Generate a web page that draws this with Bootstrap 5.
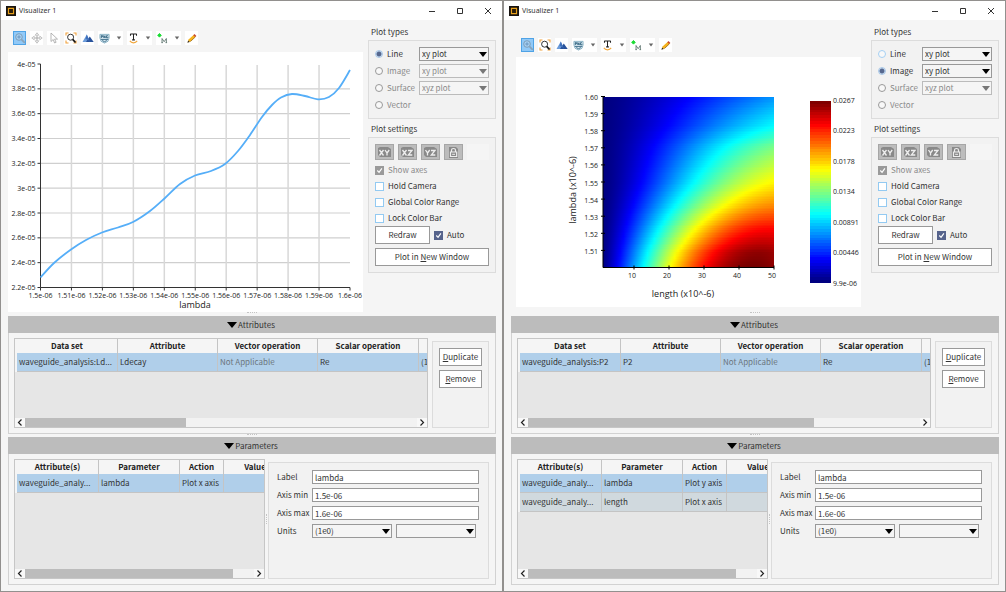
<!DOCTYPE html>
<html lang="en">
<head>
<meta charset="utf-8">
<meta name="viewport" content="width=device-width, initial-scale=1">
<title>Visualizer</title>
<link href="https://cdn.jsdelivr.net/npm/bootstrap@5.3.0/dist/css/bootstrap.min.css" rel="stylesheet">
<style>
  body { font-family: "Noto Sans CJK SC", "Noto Sans", sans-serif; font-size: 8px; line-height: 12px; color: #333; background: #92908e; }
  .desktop { min-height: 100vh; padding: 1px; gap: 2px; }
  .win { flex: 1 1 0; min-width: 0; background: #f5f5f5; }
  .titlebar { height: 19px; background: #fff; font-family: "Noto Sans", sans-serif; font-size: 7px; padding-left: 5px; gap: 3px; }
  .titlebar button { width: 28px; height: 19px; border: 0; background: none; padding: 0; line-height: 0; }
  .content { padding: 0 6px 6px 7px; }
  .main-line { padding-top: 11px; margin-right: 5px; }
  .main-image { padding: 18px 0 0 5px; margin-right: 10px; }
  .tools { gap: 4px; padding-left: 5px; margin-bottom: 7px; }
  .main-image .tools { margin-bottom: 5px; }
  .tools button { height: 14px; width: 13px; padding: 0; border: 0; background: #fff; gap: 6px; line-height: 0; display: flex; align-items: center; justify-content: center; }
  .tools button.drop { width: 25px; }
  .tools button.picked { background: #91c9f7; box-shadow: inset 0 0 0 1px #4fa3e6; }
  .plot { background: #fff; width: 100%; height: auto; display: block; font-family: "Open Sans", sans-serif; font-size: 7px; }
  .plot .axis-name { font-size: 9px; }
  .side { flex: 0 0 128px; padding-top: 4px; }
  .side-title { height: 16px; line-height: 16px; padding-left: 3px; }
  .group { background: #f2f2f2; border: 1px solid #dcdcdc; }
  .types { padding: 6px; display: grid; grid-template-columns: 44px 1fr; row-gap: 3px; margin-bottom: 2px; }
  .settings { padding: 6px; }
  .opt { gap: 4px; height: 14px; white-space: nowrap; }
  .off { color: #8a8a8a; }
  input[type=radio] { appearance: none; width: 8px; height: 8px; margin: 0; border: 1px solid #999; border-radius: 50%; background: #f8f8f8; }
  input[type=radio].live { border-color: #a5d0f3; }
  input[type=radio]:checked { border-color: #a9c8e8; background: radial-gradient(circle, #56688f 0 2px, #cfe0f2 3px); }
  input[type=checkbox] { appearance: none; width: 9px; height: 9px; margin: 0; border: 1px solid #93caf2; background: #fff; }
  input[type=checkbox]:checked { border-color: #56638c; background: #56638c url("data:image/svg+xml,%3Csvg xmlns='http://www.w3.org/2000/svg' viewBox='0 0 8 8'%3E%3Cpath d='M1.5 4l2 2.2L6.7 1.5' fill='none' stroke='white' stroke-width='1.3'/%3E%3C/svg%3E"); }
  input[type=checkbox]:disabled { border-color: #9a9a9a; background-color: #9a9a9a; opacity: 1; }
  select, input[type=text] { height: 14px; width: 100%; border: 1px solid #999; border-radius: 0; padding: 0 2px; font-size: 8px; line-height: 12px; color: #333; background: #fff; display: block; }
  select { appearance: none; background: #f5f5f5 url("data:image/svg+xml,%3Csvg xmlns='http://www.w3.org/2000/svg' width='8' height='5' viewBox='0 0 8 5'%3E%3Cpath d='M0 0h8L4 5z'/%3E%3C/svg%3E") no-repeat right 1px center; }
  select:disabled { color: #8a8a8a; opacity: 1; border-color: #bbb; background-image: url("data:image/svg+xml,%3Csvg xmlns='http://www.w3.org/2000/svg' width='8' height='5' viewBox='0 0 8 5'%3E%3Cpath d='M0 0h8L4 5z' fill='%23777'/%3E%3C/svg%3E"); }
  .views { gap: 4px; margin-bottom: 2px; }
  .views button { width: 19px; height: 16px; border: 1px solid #a6a6a6; background: #bcbcbc; padding: 0; line-height: 0; }
  .views .blank { flex: 1; height: 16px; background: #f5f5f5; }
  .check { height: 16px; gap: 4px; }
  .half { flex: 0 0 55px; }
  .plain { height: 18px; border: 1px solid #999; border-radius: 0; background: #fff; color: #333; font-size: 8px; line-height: 14px; padding: 0; text-align: center; }
  .grip { height: 4px; }
  .grip::after { content: ""; display: block; width: 10px; border-top: 1px dotted #c4c4c4; }
  .grip.short { height: 3px; }
  .fold { height: 17px; background: #bcbcbc; border: 0; font-size: 8px; line-height: 17px; color: #333; gap: 1px; padding: 0 2px 0 0; }
  .fold-body { border: 1px solid #d2d2d2; border-top: 0; padding: 5px 6px 5px 5px; gap: 4px; }
  .sheet { border: 1px solid #c6c6c6; background: #e6e6e6; overflow: hidden; min-width: 0; min-height: 90px; }
  .sheet-wide { flex: 1 1 0; }
  .sheet-half { flex: 0 0 251px; min-height: 120px; }
  .sheet table { table-layout: fixed; border-left: 2px solid #f5f5f5; border-collapse: separate; border-spacing: 0; }
  .sheet-wide table { width: 480px; }
  .sheet-half table { width: 272px; }
  .sheet th, .sheet td { padding: 0 2px; height: 14px; line-height: 14px; border-right: 1px solid #c4c4c4; white-space: nowrap; }
  .sheet th { background: #f5f5f5; text-align: center; color: #222; font-weight: 700; }
  .sheet td { height: 19px; border-bottom: 1px solid #c4c4c4; background: #d0d9de; }
  .sheet .chosen td { background: #b0cfea; }
  .scroller { height: 9px; background: #f2f2f2; line-height: 0; }
  .scroller .end { width: 10px; background: #f8f8f8; text-align: center; }
  .scroller .track { flex: 1; }
  .scroller .thumb { height: 9px; background: #bcbcbc; }
  .actions { flex: 0 0 57px; padding: 6px; margin-top: 3px; gap: 4px; }
  .axis-form { padding: 7px 9px 7px 8px; margin-top: 3px; display: grid; grid-template-columns: 35px 1fr; row-gap: 4px; align-content: start; white-space: nowrap; }
  .axis-form label { line-height: 14px; }
  .units { gap: 4px; padding-right: 3px; }
  .side-grip { width: 1px; align-self: center; height: 10px; border-left: 1px dotted #c4c4c4; margin: 0 1px; }
</style>
</head>
<body>
<svg width="0" height="0" class="position-absolute" aria-hidden="true">
  <symbol id="i-app" viewBox="0 0 11 11"><path d="M0 0h11v11H0z" fill="#171310"/><path d="M2.7 2.7h5.6v5.6H2.7z" fill="#2a1c08" stroke="#e8a11c" stroke-width="1.3"/></symbol>
  <symbol id="i-min" viewBox="0 0 8 8"><path d="M1 4.5h6" stroke="#333" fill="none"/></symbol>
  <symbol id="i-max" viewBox="0 0 8 8"><path d="M1.5 1.5h5v5h-5z" stroke="#333" fill="none"/></symbol>
  <symbol id="i-close" viewBox="0 0 8 8"><path d="M1 1l6 6M7 1L1 7" stroke="#333" fill="none"/></symbol>
  <symbol id="i-zoom" viewBox="0 0 12 12"><circle cx="5" cy="5" r="3.3" fill="#a8d2f5" stroke="#7d9db8"/><path d="M5 3.2v3.6M3.2 5h3.6" stroke="#5e8bb5" stroke-width=".8"/><path d="M7.4 7.4l3.4 3.4" stroke="#8aa4ba" stroke-width="1.8"/></symbol>
  <symbol id="i-pan" viewBox="0 0 12 12"><path d="M6 .8l1.8 2.4H4.2zM6 11.2l1.8-2.4H4.2zM.8 6l2.4-1.8v3.6zM11.2 6L8.8 4.2v3.6z" fill="#fff" stroke="#aaa" stroke-width=".7"/><path d="M6 3.5v5M3.5 6h5" stroke="#aaa"/></symbol>
  <symbol id="i-arrow" viewBox="0 0 12 12"><path d="M3 1v8.5l2.2-2 1.4 3.5 1.5-.7-1.5-3.2H9.5z" fill="#fff" stroke="#a5a5a5" stroke-width=".8"/></symbol>
  <symbol id="i-fit" viewBox="0 0 12 12"><path d="M1 3.5V1h2.5M8.5 1H11v2.5M11 8.5V11H8.500M3.500 11H1V8.500" fill="none" stroke="#f0a13c" stroke-width="1.1"/><circle cx="5.6" cy="5.2" r="3" fill="#fff" stroke="#333"/><path d="M7.7 7.4L10.5 10.5" stroke="#111" stroke-width="1.7"/></symbol>
  <symbol id="i-mesh" viewBox="0 0 12 12"><path d="M.5 10L4.8 2.5 8 10z" fill="#6b9bd9"/><path d="M4 10l3.8-5.5L11.7 10z" fill="#28529b"/><path d="M4.8 2.5L3.5 7l2.5.8 2 2.2" fill="#3f70bb"/></symbol>
  <symbol id="i-png" viewBox="0 0 12 12"><path d="M1 1.500h10v4L9.800 9 6 11 2.200 9 1 5.500z" fill="#dcebf3" stroke="#6c9db5" stroke-width=".8"/><path d="M2.500 5.500V2.800h1.300v1.400H2.500M5.200 5.500V2.800l1.500 2.700V2.800M9.700 2.900H8.200v2.400h1.500V4.200M3.500 8.200L6 9.500l2.500-1.300M2 7h8" stroke="#245a78" stroke-width=".9" fill="none"/></symbol>
  <symbol id="i-text" viewBox="0 0 12 12"><path d="M2.500 1.200h7M2.700 1v2M9.300 1v2M6 1v7M4.500 7.500h3" stroke="#222" stroke-width="1.1" fill="none"/><path d="M2 8.500q1.500 2 4 2.300 2.500-.3 4-2.300" stroke="#f2a83e" stroke-width="1.3" fill="none"/></symbol>
  <symbol id="i-mark" viewBox="0 0 12 12"><path d="M2.700.5L4.700 2.500 2.700 4.500.7 2.500z" fill="#19dc32" stroke="#19dc32"/><path d="M5.500 10.500V6l2.300 3.500L10.200 6v4.500M4.800 10.500h1.700M9.300 10.500H11" fill="none" stroke="#526b65" stroke-width=".9"/></symbol>
  <symbol id="i-pen" viewBox="0 0 12 12"><path d="M2 10l.8-2.800L8.500 2l2 2L4.800 9.300z" fill="#f5b21b"/><path d="M8 2.400L9.300 1.200l2 2L10 4.400z" fill="#c8452f"/><path d="M1.500 10.500l.9-2.300 1.700 1.500z" fill="#33291c"/><path d="M4.800 9.300L10.200 4.300" stroke="#94600c" stroke-width=".8"/></symbol>
  <symbol id="i-down" viewBox="0 0 6 4"><path d="M.8.5h4.400L3 3.500z" fill="#666"/></symbol>
  <symbol id="i-fold" viewBox="0 0 10 6"><path d="M0 0h10L5 6z" fill="#000"/></symbol>
  <symbol id="i-xy" viewBox="0 0 13 11"><path d="M0 1l2-1h8l3 2v8H2L0 8z" fill="#898989"/><path d="M1.500 3l4 5.500M5.500 3l-4 5.500M7 3l2 3v2.500M11.200 3L9 6" stroke="#eee" stroke-width="1.3" fill="none"/></symbol>
  <symbol id="i-xz" viewBox="0 0 13 11"><path d="M0 1l2-1h8l3 2v8H2L0 8z" fill="#898989"/><path d="M1.500 3l4 5.500M5.500 3l-4 5.500M7 3.500h4L7.300 8h4" stroke="#eee" stroke-width="1.3" fill="none"/></symbol>
  <symbol id="i-yz" viewBox="0 0 13 11"><path d="M0 1l2-1h8l3 2v8H2L0 8z" fill="#898989"/><path d="M1.500 3l2 3v2.500M5.700 3l-2.200 3M7 3.500h4L7.300 8h4" stroke="#eee" stroke-width="1.3" fill="none"/></symbol>
  <symbol id="i-lock" viewBox="0 0 13 11"><path d="M2 0h7l2 2v9H2z" fill="#898989"/><path d="M4.500 5V3q0-1.500 2-1.500T8.500 3v2M3.500 5h6.200v4.500H3.500z" fill="none" stroke="#eee" stroke-width="1.2"/><path d="M5.200 7.300h2.800" stroke="#eee"/></symbol>
  <symbol id="i-left" viewBox="0 0 6 9"><path d="M4.500 1.500l-3 3 3 3" fill="none" stroke="#222" stroke-width="1.2"/></symbol>
  <symbol id="i-right" viewBox="0 0 6 9"><path d="M1.500 1.500l3 3-3 3" fill="none" stroke="#222" stroke-width="1.2"/></symbol>
</svg>

<div class="desktop d-flex">
  <!-- Line plot window -->
  <section class="win d-flex flex-column">
    <header class="titlebar d-flex align-items-center">
      <svg width="10" height="10"><use href="#i-app"/></svg><span class="flex-grow-1">Visualizer 1</span>
      <div class="d-flex">
        <button aria-label="Minimize"><svg width="8" height="8"><use href="#i-min"/></svg></button><button aria-label="Maximize"><svg width="8" height="8"><use href="#i-max"/></svg></button><button aria-label="Close"><svg width="8" height="8"><use href="#i-close"/></svg></button>
      </div>
    </header>
    <div class="content flex-grow-1 d-flex flex-column">
      <div class="d-flex">
        <div class="main-line flex-grow-1">
          <div class="tools d-flex">
            <button class="picked" aria-label="Zoom"><svg width="12" height="12"><use href="#i-zoom"/></svg></button>
            <button aria-label="Pan"><svg width="12" height="12"><use href="#i-pan"/></svg></button>
            <button aria-label="Select"><svg width="12" height="12"><use href="#i-arrow"/></svg></button>
            <button aria-label="Zoom extent"><svg width="12" height="12"><use href="#i-fit"/></svg></button>
            <button aria-label="Mesh"><svg width="12" height="12"><use href="#i-mesh"/></svg></button>
            <button class="drop" aria-label="Export image"><svg width="11" height="11"><use href="#i-png"/></svg><svg width="6" height="4"><use href="#i-down"/></svg></button>
            <button class="drop" aria-label="Text"><svg width="11" height="11"><use href="#i-text"/></svg><svg width="6" height="4"><use href="#i-down"/></svg></button>
            <button class="drop" aria-label="Marker"><svg width="11" height="11"><use href="#i-mark"/></svg><svg width="6" height="4"><use href="#i-down"/></svg></button>
            <button aria-label="Edit"><svg width="11" height="11"><use href="#i-pen"/></svg></button>
          </div>
          <svg class="plot" id="linePlot" viewBox="0 0 355 260" role="img" aria-label="Ldecay against lambda"></svg>
        </div>
        <aside class="side">
          <div class="side-title">Plot types</div>
          <div class="group types">
            <label class="opt d-flex align-items-center"><input type="radio" name="t1" checked>Line</label><select aria-label="Line plot"><option>xy plot</option></select>
            <label class="opt off d-flex align-items-center"><input type="radio" name="t1" disabled>Image</label><select aria-label="Image plot" disabled><option>xy plot</option></select>
            <label class="opt off d-flex align-items-center"><input type="radio" name="t1" disabled>Surface</label><select aria-label="Surface plot" disabled><option>xyz plot</option></select>
            <label class="opt off d-flex align-items-center"><input type="radio" name="t1" disabled>Vector</label>
          </div>
          <div class="side-title">Plot settings</div>
          <div class="group settings">
            <div class="views d-flex">
              <button aria-label="XY view"><svg width="13" height="11"><use href="#i-xy"/></svg></button><button aria-label="XZ view"><svg width="13" height="11"><use href="#i-xz"/></svg></button><button aria-label="YZ view"><svg width="13" height="11"><use href="#i-yz"/></svg></button><button aria-label="Lock view"><svg width="13" height="11"><use href="#i-lock"/></svg></button><span class="blank"></span>
            </div>
            <label class="check off d-flex align-items-center"><input type="checkbox" checked disabled>Show axes</label>
            <label class="check d-flex align-items-center"><input type="checkbox">Hold Camera</label>
            <label class="check d-flex align-items-center"><input type="checkbox">Global Color Range</label>
            <label class="check d-flex align-items-center"><input type="checkbox">Lock Color Bar</label>
            <div class="d-flex gap-1 mb-1">
              <button class="plain half">Redraw</button>
              <label class="d-flex align-items-center gap-1"><input type="checkbox" checked>Auto</label>
            </div>
            <button class="plain w-100">Plot in <u>N</u>ew Window</button>
          </div>
        </aside>
      </div>
      <div class="grip d-flex justify-content-center mt-auto"></div>
      <button class="fold d-flex align-items-center justify-content-center"><svg width="10" height="6"><use href="#i-fold"/></svg>Attributes</button>
      <div class="fold-body d-flex">
        <div class="sheet sheet-wide d-flex flex-column">
          <table>
            <colgroup><col style="width:101px"><col style="width:100px"><col style="width:100px"><col style="width:101px"><col></colgroup>
            <thead><tr><th>Data set</th><th>Attribute</th><th>Vector operation</th><th>Scalar operation</th><th></th></tr></thead>
            <tbody><tr class="chosen"><td>waveguide_analysis:Ld...</td><td>Ldecay</td><td class="text-secondary">Not Applicable</td><td>Re</td><td>(1e0)</td></tr></tbody>
          </table>
          <div class="scroller d-flex mt-auto"><span class="end"><svg width="6" height="9"><use href="#i-left"/></svg></span><div class="track"><div class="thumb" style="width:41%"></div></div><span class="end"><svg width="6" height="9"><use href="#i-right"/></svg></span></div>
        </div>
        <div class="group actions d-flex flex-column"><button class="plain"><u>D</u>uplicate</button><button class="plain"><u>R</u>emove</button></div>
      </div>
      <div class="grip short d-flex justify-content-center"></div>
      <button class="fold d-flex align-items-center justify-content-center"><svg width="10" height="6"><use href="#i-fold"/></svg>Parameters</button>
      <div class="fold-body d-flex gap-0">
        <div class="sheet sheet-half d-flex flex-column">
          <table>
            <colgroup><col style="width:82px"><col style="width:81px"><col style="width:44px"><col></colgroup>
            <thead><tr><th>Attribute(s)</th><th>Parameter</th><th>Action</th><th>Value</th></tr></thead>
            <tbody><tr class="chosen"><td>waveguide_analy...</td><td>lambda</td><td>Plot x axis</td><td></td></tr></tbody>
          </table>
          <div class="scroller d-flex mt-auto"><span class="end"><svg width="6" height="9"><use href="#i-left"/></svg></span><div class="track"><div class="thumb" style="width:91%"></div></div><span class="end"><svg width="6" height="9"><use href="#i-right"/></svg></span></div>
        </div>
        <span class="side-grip"></span>
        <div class="group axis-form flex-grow-1">
          <label for="l1">Label</label><input type="text" id="l1" value="lambda">
          <label for="mn1">Axis min</label><input type="text" id="mn1" value="1.5e-06">
          <label for="mx1">Axis max</label><input type="text" id="mx1" value="1.6e-06">
          <label for="u1">Units</label><div class="units d-flex"><select id="u1"><option>(1e0)</option></select><select aria-label="Unit name"><option></option></select></div>
        </div>
      </div>
    </div>
  </section>

  <!-- Image plot window -->
  <section class="win d-flex flex-column">
    <header class="titlebar d-flex align-items-center">
      <svg width="10" height="10"><use href="#i-app"/></svg><span class="flex-grow-1">Visualizer 1</span>
      <div class="d-flex">
        <button aria-label="Minimize"><svg width="8" height="8"><use href="#i-min"/></svg></button><button aria-label="Maximize"><svg width="8" height="8"><use href="#i-max"/></svg></button><button aria-label="Close"><svg width="8" height="8"><use href="#i-close"/></svg></button>
      </div>
    </header>
    <div class="content flex-grow-1 d-flex flex-column">
      <div class="d-flex">
        <div class="main-image flex-grow-1">
          <div class="tools d-flex">
            <button class="picked" aria-label="Zoom"><svg width="12" height="12"><use href="#i-zoom"/></svg></button>
            <button aria-label="Zoom extent"><svg width="12" height="12"><use href="#i-fit"/></svg></button>
            <button aria-label="Mesh"><svg width="12" height="12"><use href="#i-mesh"/></svg></button>
            <button class="drop" aria-label="Export image"><svg width="11" height="11"><use href="#i-png"/></svg><svg width="6" height="4"><use href="#i-down"/></svg></button>
            <button class="drop" aria-label="Text"><svg width="11" height="11"><use href="#i-text"/></svg><svg width="6" height="4"><use href="#i-down"/></svg></button>
            <button class="drop" aria-label="Marker"><svg width="11" height="11"><use href="#i-mark"/></svg><svg width="6" height="4"><use href="#i-down"/></svg></button>
            <button aria-label="Edit"><svg width="11" height="11"><use href="#i-pen"/></svg></button>
          </div>
          <svg class="plot" id="imagePlot" viewBox="0 0 345 250" role="img" aria-label="P2 over length and lambda"></svg>
        </div>
        <aside class="side">
          <div class="side-title">Plot types</div>
          <div class="group types">
            <label class="opt d-flex align-items-center"><input type="radio" name="t2" class="live">Line</label><select aria-label="Line plot"><option>xy plot</option></select>
            <label class="opt d-flex align-items-center"><input type="radio" name="t2" checked>Image</label><select aria-label="Image plot"><option>xy plot</option></select>
            <label class="opt off d-flex align-items-center"><input type="radio" name="t2" disabled>Surface</label><select aria-label="Surface plot" disabled><option>xyz plot</option></select>
            <label class="opt off d-flex align-items-center"><input type="radio" name="t2" disabled>Vector</label>
          </div>
          <div class="side-title">Plot settings</div>
          <div class="group settings">
            <div class="views d-flex">
              <button aria-label="XY view"><svg width="13" height="11"><use href="#i-xy"/></svg></button><button aria-label="XZ view"><svg width="13" height="11"><use href="#i-xz"/></svg></button><button aria-label="YZ view"><svg width="13" height="11"><use href="#i-yz"/></svg></button><button aria-label="Lock view"><svg width="13" height="11"><use href="#i-lock"/></svg></button><span class="blank"></span>
            </div>
            <label class="check off d-flex align-items-center"><input type="checkbox" checked disabled>Show axes</label>
            <label class="check d-flex align-items-center"><input type="checkbox">Hold Camera</label>
            <label class="check d-flex align-items-center"><input type="checkbox">Global Color Range</label>
            <label class="check d-flex align-items-center"><input type="checkbox">Lock Color Bar</label>
            <div class="d-flex gap-1 mb-1">
              <button class="plain half">Redraw</button>
              <label class="d-flex align-items-center gap-1"><input type="checkbox" checked>Auto</label>
            </div>
            <button class="plain w-100">Plot in <u>N</u>ew Window</button>
          </div>
        </aside>
      </div>
      <div class="grip d-flex justify-content-center mt-auto"></div>
      <button class="fold d-flex align-items-center justify-content-center"><svg width="10" height="6"><use href="#i-fold"/></svg>Attributes</button>
      <div class="fold-body d-flex">
        <div class="sheet sheet-wide d-flex flex-column">
          <table>
            <colgroup><col style="width:101px"><col style="width:100px"><col style="width:100px"><col style="width:101px"><col></colgroup>
            <thead><tr><th>Data set</th><th>Attribute</th><th>Vector operation</th><th>Scalar operation</th><th></th></tr></thead>
            <tbody><tr class="chosen"><td>waveguide_analysis:P2</td><td>P2</td><td class="text-secondary">Not Applicable</td><td>Re</td><td>(1e0)</td></tr></tbody>
          </table>
          <div class="scroller d-flex mt-auto"><span class="end"><svg width="6" height="9"><use href="#i-left"/></svg></span><div class="track"><div class="thumb" style="width:73%"></div></div><span class="end"><svg width="6" height="9"><use href="#i-right"/></svg></span></div>
        </div>
        <div class="group actions d-flex flex-column"><button class="plain"><u>D</u>uplicate</button><button class="plain"><u>R</u>emove</button></div>
      </div>
      <div class="grip short d-flex justify-content-center"></div>
      <button class="fold d-flex align-items-center justify-content-center"><svg width="10" height="6"><use href="#i-fold"/></svg>Parameters</button>
      <div class="fold-body d-flex gap-0">
        <div class="sheet sheet-half d-flex flex-column">
          <table>
            <colgroup><col style="width:82px"><col style="width:81px"><col style="width:44px"><col></colgroup>
            <thead><tr><th>Attribute(s)</th><th>Parameter</th><th>Action</th><th>Value</th></tr></thead>
            <tbody><tr class="chosen"><td>waveguide_analy...</td><td>lambda</td><td>Plot y axis</td><td></td></tr><tr><td>waveguide_analy...</td><td>length</td><td>Plot x axis</td><td></td></tr></tbody>
          </table>
          <div class="scroller d-flex mt-auto"><span class="end"><svg width="6" height="9"><use href="#i-left"/></svg></span><div class="track"><div class="thumb" style="width:91%"></div></div><span class="end"><svg width="6" height="9"><use href="#i-right"/></svg></span></div>
        </div>
        <span class="side-grip"></span>
        <div class="group axis-form flex-grow-1">
          <label for="l2">Label</label><input type="text" id="l2" value="lambda">
          <label for="mn2">Axis min</label><input type="text" id="mn2" value="1.5e-06">
          <label for="mx2">Axis max</label><input type="text" id="mx2" value="1.6e-06">
          <label for="u2">Units</label><div class="units d-flex"><select id="u2"><option>(1e0)</option></select><select aria-label="Unit name"><option></option></select></div>
        </div>
      </div>
    </div>
  </section>
</div>

<script src="https://cdn.jsdelivr.net/npm/bootstrap@5.3.0/dist/js/bootstrap.bundle.min.js"></script>
<script>
  const text = (x, y, s, anchor = 'middle', extra = '') => `<text x="${x}" y="${y}" text-anchor="${anchor}" fill="#222" ${extra}>${s}</text>`;
  const line = (x1, y1, x2, y2, c, w = 1) => `<path d="M${x1} ${y1}L${x2} ${y2}" stroke="${c}" stroke-width="${w}"/>`;

  // Line plot: grid, axes and a smooth curve through the samples
  (function () {
    const L = 32.5, R = 342, T = 12, B = 235.5;
    let s = '';
    const ys = ['4', '3.8', '3.6', '3.4', '3.2', '3', '2.8', '2.6', '2.4', '2.2'];
    ys.forEach((v, i) => {
      const y = T + i * (B - T) / 9;
      if (i && i < 9) s += line(L, y, R, y, '#cfcfcf', 1.2);
      s += line(L - 3, y, L, y, '#333') + text(L - 5, y + 2.5, v + 'e-05', 'end');
    });
    for (let i = 0; i <= 10; i++) {
      const x = L + i * (R - L) / 10;
      if (i && i < 10) s += line(x, T + 1, x, B, '#d8d8d8', 1.5);
      s += line(x, B, x, B + 3, '#333');
      s += text(x, B + 10, (i === 0 ? '1.5' : i === 10 ? '1.6' : '1.5' + i) + 'e-06');
    }
    s += line(L, T, L, B, '#333') + line(L, B, R, B, '#333');
    const p = [[32.5,225.5],[46,211],[63,197.5],[78,188],[94,180.5],[110,175.5],[125,170],[142,159],[157,146],[172,132],[187,123.5],[203,119],[217,112],[230,99],[242,83],[254,65],[264,53],[273,45.5],[284,42],[297,44],[310,47.3],[321,45],[331,36],[342,18]];
    let d = `M${p[0]}`;
    for (let i = 0; i < p.length - 1; i++) {
      const a = p[i - 1] || p[i], b = p[i], c = p[i + 1], e = p[i + 2] || c;
      d += `C${b[0] + (c[0] - a[0]) / 6} ${b[1] + (c[1] - a[1]) / 6} ${c[0] - (e[0] - b[0]) / 6} ${c[1] - (e[1] - b[1]) / 6} ${c}`;
    }
    s += `<path d="${d}" fill="none" stroke="#55aef8" stroke-width="1.8"/>`;
    s += text(187, 256, 'lambda', 'middle', 'class="axis-name"');
    document.getElementById('linePlot').innerHTML = s;
  })();

  // Image plot: rows of the field drawn with the jet colour map
  (function () {
    const clamp = v => Math.max(0, Math.min(1, v));
    const jet = t => 'rgb(' + [3, 2, 1].map(k => Math.round(255 * clamp(1.5 - Math.abs(4 * t - k)))).join() + ')';
    const edge = [[0, .985], [.08, .975], [.22, .875], [.35, .75], [.485, .64], [.7, .5], [.83, .375], [1, .27]];
    const atEdge = y => { let i = 1; while (edge[i][0] < y) i++; const [a, u] = edge[i - 1], [b, v] = edge[i]; return u + (v - u) * (y - a) / (b - a); };
    const X = 87, Y = 39.5, W = 171, H = 171, N = 100;
    let defs = '', s = '<g shape-rendering="crispEdges">';
    for (let r = 0; r < N; r++) {
      const y = 1 - r / (N - 1), a = 1.785 - .785 * y, p = 1.12 + .28 * Math.min(1, y * 2), k = atEdge(y) / Math.pow(Math.sin(a), p);
      let stops = '';
      for (let j = 0; j <= 50; j++) stops += `<stop offset="${j / 50}" stop-color="${jet(k * Math.pow(Math.sin(a * j / 50), p))}"/>`;
      defs += `<linearGradient id="row${r}">${stops}</linearGradient>`;
      s += `<rect x="${X}" y="${Y + r * H / N}" width="${W}" height="${H / N}" fill="url(#row${r})"/>`;
    }
    for (let r = 0; r < 64; r++) s += `<rect x="294" y="${44 + r * 182 / 64}" width="21" height="${182 / 64}" fill="${jet(1 - r / 63)}"/>`;
    s += '</g>' + line(X, Y, X, Y + H, '#000') + line(X, Y + H, X + W, Y + H, '#000');
    for (let i = 0; i < 10; i++) { const y = Y + i * 17.1; s += line(X - 2, y, X + 2, y, '#000') + text(X - 5, y + 3.5, (1.6 - i / 100).toFixed(2), 'end'); }
    for (let i = 1; i <= 5; i++) { const x = X + 31 + (i - 1) * 35; s += line(x, Y + H - 2, x, Y + H + 2, '#000') + text(x - 2, Y + H + 10, i * 10); }
    ['0.0267', '0.0223', '0.0178', '0.0134', '0.00891', '0.00446', '9.9e-06'].forEach((v, i) => s += text(317, 45.5 + i * 30.5, v, 'start'));
    s += text(167, 240, 'length (x10^-6)', 'middle', 'class="axis-name"');
    s += text(0, 0, 'lambda (x10^-6)', 'middle', 'class="axis-name" transform="translate(60 133) rotate(-90)"');
    document.getElementById('imagePlot').innerHTML = `<defs>${defs}</defs>${s}`;
  })();
</script>
</body>
</html>
